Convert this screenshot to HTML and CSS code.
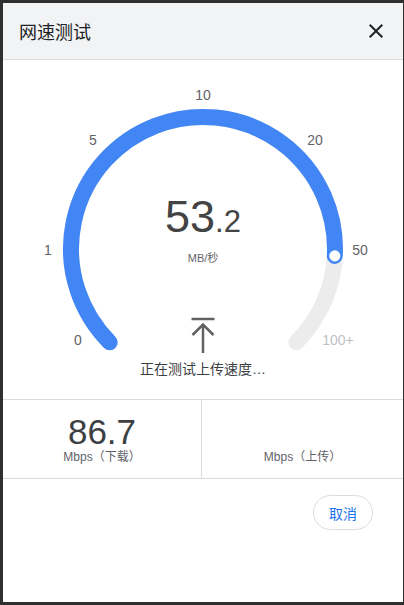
FILE: index.html
```html
<!DOCTYPE html>
<html lang="zh-CN">
<head>
<meta charset="UTF-8">
<meta name="viewport" content="width=device-width, initial-scale=1.0">
<title>网速测试</title>
<link rel="stylesheet" href="styles.css">
</head>
<body>
<div class="dialog">
    <div class="dialog-header">
        <h2 class="dialog-title">网速测试</h2>
        <button class="close-btn" aria-label="关闭">
            <svg viewBox="0 0 24 24" width="24" height="24"><path d="M19 6.41L17.59 5 12 10.59 6.41 5 5 6.41 10.59 12 5 17.59 6.41 19 12 13.41 17.59 19 19 17.59 13.41 12z"/></svg>
        </button>
    </div>

    <div class="gauge">
        <svg class="gauge-svg" viewBox="0 0 400 339" width="400" height="339">
            <path class="track" d="M 106.7 282.3 A 132 132 0 1 1 293.3 282.3"/>
            <path class="progress" d="M 106.7 282.3 A 132 132 0 1 1 331.8 195.9"/>
            <circle class="knob" cx="331.8" cy="195.9" r="6.3"/>
            <g class="scale">
                <text x="75" y="285">0</text>
                <text x="45" y="195">1</text>
                <text x="90" y="85">5</text>
                <text x="200" y="40">10</text>
                <text x="312" y="85">20</text>
                <text x="357" y="195">50</text>
                <text class="muted" x="335" y="285">100+</text>
            </g>
        </svg>
        <div class="readout">
            <div class="speed">53<span class="decimal">.2</span></div>
            <div class="speed-unit">MB/秒</div>
        </div>
        <div class="status">
            <svg class="upload-icon" viewBox="0 0 24 38" width="24" height="38">
                <path d="M0.5 3 H23.5 M12 37 V8.5 M1.5 19 L12 8.5 L22.5 19"/>
            </svg>
            <div class="status-text">正在测试上传速度…</div>
        </div>
    </div>

    <div class="results">
        <div class="result">
            <div class="result-value">86.7</div>
            <div class="result-label">Mbps（下载）</div>
        </div>
        <div class="result">
            <div class="result-value"></div>
            <div class="result-label">Mbps（上传）</div>
        </div>
    </div>

    <div class="dialog-footer">
        <button class="cancel-btn">取消</button>
    </div>
</div>
</body>
</html>
```

FILE: styles.css
```css
body {
    margin: 3px 1px 3px 3px;
    background-color: #2f2f2f;
    font-family: "Liberation Sans", "Noto Sans CJK SC", Arial, sans-serif;
}
.dialog {
    width: 400px;
    height: 599px;
    background-color: #fff;
    display: flex;
    flex-direction: column;
}
.dialog-header {
    height: 56px;
    background-color: #f1f3f4;
    border-bottom: 1px solid #dadce0;
    display: flex;
    align-items: center;
    justify-content: space-between;
    padding: 0 15px 0 16px;
}
.dialog-title {
    margin: 0;
    font-size: 18px;
    font-weight: normal;
    color: #202124;
    font-family: "Noto Sans CJK SC", sans-serif;
}
.close-btn {
    width: 24px;
    height: 24px;
    padding: 0;
    border: none;
    background: none;
    cursor: pointer;
}
.close-btn svg {
    display: block;
    fill: #202124;
}
.gauge {
    position: relative;
    height: 339px;
    border-bottom: 1px solid #dadce0;
}
.gauge-svg {
    display: block;
}
.track, .progress {
    fill: none;
    stroke-width: 16;
    stroke-linecap: round;
}
.track {
    stroke: #ececec;
}
.progress {
    stroke: #4285f4;
}
.knob {
    fill: #fff;
    stroke: #4285f4;
    stroke-width: 1.5;
}
.scale text {
    font-family: "Liberation Sans", Arial, sans-serif;
    font-size: 14px;
    fill: #5f6368;
    text-anchor: middle;
}
.scale text.muted {
    fill: #bdc1c6;
}
.readout {
    position: absolute;
    top: 135px;
    left: 0;
    right: 0;
    text-align: center;
    color: #444;
}
.speed {
    font-size: 45px;
    line-height: 44px;
}
.decimal {
    font-size: 31px;
}
.speed-unit {
    margin-top: 7px;
    font-size: 11px;
    line-height: 14px;
    color: #5f6368;
}
.status {
    position: absolute;
    top: 256px;
    left: 0;
    right: 0;
    text-align: center;
}
.upload-icon {
    display: block;
    margin: 0 auto;
    fill: none;
    stroke: #616161;
    stroke-width: 2.5;
}
.status-text {
    margin-top: 5px;
    font-size: 14px;
    line-height: 20px;
    color: #3c4043;
    font-family: "Liberation Sans", "Noto Sans CJK SC", sans-serif;
}
.results {
    display: grid;
    grid-template-columns: 199px 1fr;
    height: 78px;
    border-bottom: 1px solid #dadce0;
}
.result {
    text-align: center;
    padding-top: 14px;
}
.result:first-child {
    border-right: 1px solid #dadce0;
}
.result-value {
    height: 36px;
    font-size: 35px;
    line-height: 36px;
    color: #3c4043;
}
.result-label {
    font-size: 12px;
    line-height: 14px;
    color: #5f6368;
}
.dialog-footer {
    display: flex;
    justify-content: flex-end;
    padding: 16px 30px 0 0;
}
.cancel-btn {
    height: 35px;
    padding: 0 15px;
    border: 1px solid #dadce0;
    border-radius: 18px;
    background: #fff;
    color: #1a73e8;
    font-size: 14px;
    font-family: "Noto Sans CJK SC", sans-serif;
    cursor: pointer;
}
```
